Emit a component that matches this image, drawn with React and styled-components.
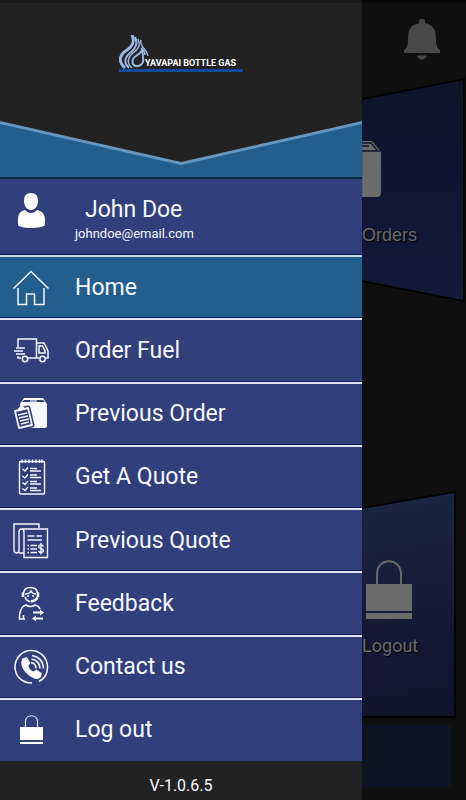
import styled, { createGlobalStyle } from "styled-components";

const GlobalStyle = createGlobalStyle`
  * {
    box-sizing: border-box;
  }

  body {
    margin: 0;
    background: #0f0f0f;
    font-family: Roboto, "Liberation Sans", sans-serif;
  }
`;

const Screen = styled.div`
  display: flex;
  min-height: 100vh;
`;

const Drawer = styled.aside`
  display: flex;
  flex-direction: column;
  flex: 0 0 77.7%;
  border-top: 3px solid #1a1a1a;
  background: #222;
  color: #f5f8ff;
`;

const Brand = styled.header`
  display: flex;
  flex-direction: column;
  align-items: center;
  justify-content: space-between;
  height: 176px;
  padding-top: 32px;
`;

const Logo = styled.div`
  display: flex;
  align-items: flex-end;
  width: 124px;
  border-bottom: 3px solid #14499b;

  svg {
    flex: none;
    margin-right: -4px;
  }
`;

const LogoText = styled.span`
  padding-bottom: 1px;
  font: bold 9px/10px Roboto, "Liberation Sans", sans-serif;
  color: #fff;
  white-space: nowrap;
`;

const Chevron = styled.div`
  width: 100%;
  height: 58px;
  border-bottom: 2px solid #0b2947;
  background: #6797be;
  clip-path: polygon(0 0, 50% 41px, 100% 0, 100% 100%, 0 100%);

  &::before {
    content: "";
    display: block;
    height: 56px;
    background: #235e8d;
    clip-path: polygon(0 3px, 50% 44px, 100% 3px, 100% 100%, 0 100%);
  }
`;

const User = styled.section`
  display: flex;
  gap: 26px;
  height: 76px;
  padding: 14px 13px 0;
  background: #313f7a;
`;

const UserName = styled.h1`
  margin: 2px 0 0 10px;
  font-size: 23px;
  line-height: 30px;
  font-weight: 400;
`;

const UserMail = styled.p`
  margin: 0;
  font-size: 13px;
  line-height: 18px;
`;

const Menu = styled.nav`
  display: flex;
  flex: 1;
  flex-direction: column;
`;

const MenuItem = styled.button`
  display: flex;
  flex: 1 0 60px;
  align-items: center;
  gap: 26px;
  padding: 0 13px;
  border: 0;
  border-top: 2px solid ${({ $active }) => ($active ? "#c4dbe9" : "#dfe5f4")};
  background: ${({ $active }) => ($active ? "#235e8c" : "#313f7a")};
  box-shadow: 0 -1px 0 #10165a;
  color: inherit;
  font-family: inherit;
  font-size: 23px;
  line-height: 28px;
  text-align: left;
  cursor: pointer;
`;

const Icon = styled.svg`
  flex: none;
  width: 36px;
  height: 36px;
  fill: none;
  stroke: #f2f6ff;
`;

const Version = styled.footer`
  height: 39px;
  padding-top: 15px;
  font-size: 16px;
  line-height: 20px;
  text-align: center;
`;

const Backdrop = styled.main`
  display: flex;
  flex: 1;
  flex-direction: column;
  min-width: 0;
  border-top: 3px solid #090909;
  background: #0f0f0f;
  color: #6b6b6b;
`;

const TopBar = styled.div`
  display: flex;
  justify-content: flex-end;
  height: 75px;
  padding: 15px 26px 0 0;
`;

const BellButton = styled.button`
  height: 44px;
  padding: 0;
  border: 0;
  background: none;
  cursor: pointer;
`;

const shapes = {
  orders: "polygon(0 20px, 100% 0, 100% 100%, 0 calc(100% - 20px))",
  logout: "polygon(0 16px, 100% 0, 100% 100%, 0 100%)",
};

const Card = styled.button`
  height: ${({ $shape }) => ($shape === "orders" ? 224 : 227)}px;
  margin: 0 ${({ $shape }) => ($shape === "orders" ? 1 : 10)}px 0 0;
  padding: 2px 2px 2px 0;
  border: 0;
  background: #000;
  clip-path: ${({ $shape }) => shapes[$shape]};
  color: inherit;
  font-family: ${({ $shape }) =>
    $shape === "orders" ? '"Liberation Sans", sans-serif' : "Roboto, sans-serif"};
  font-size: 18px;
  line-height: 24px;
  text-align: left;
  cursor: pointer;
`;

const CardFace = styled.span`
  display: flex;
  flex-direction: column;
  justify-content: flex-end;
  gap: ${({ $shape }) => ($shape === "orders" ? 26 : 14)}px;
  height: 100%;
  padding-bottom: ${({ $shape }) => ($shape === "orders" ? 53 : 58)}px;
  background: ${({ $shape }) =>
    $shape === "orders"
      ? "linear-gradient(#0e1428, #101634 60%, #15193a)"
      : "linear-gradient(170deg, #1a2743, #171a38 50%, #0f142b)"};
  clip-path: ${({ $shape }) => shapes[$shape]};
  text-shadow: 1px 1px 1px #000;

  svg {
    display: block;
  }
`;

const Spacer = styled.div`
  flex: 0 1 189px;
`;

const BottomPanel = styled.div`
  height: 62px;
  margin: 7px 15px 13px 0;
  background: #0c1422;
`;

const Flame = () => (
  <svg width="30" height="34" viewBox="0 0 30 34" fill="none" stroke="#9db9e6">
    <path d="M13 0C16 7 14 11 8 15C0 20 -1 27 6 33" strokeWidth="3" />
    <path d="M16 2C19 9 17 13 11 18C5 23 5 28 10 33" strokeWidth="2" />
    <path d="M19 4C22 11 19 14 14 18C8 23 8 29 13 33" strokeWidth="1.5" />
    <path d="M23 15C22 19 16 20 14 24C12 29 16 32 19 31C24 30 25 26 24 22C24 20 24 17 23 15Z" strokeWidth="2" />
    <path d="M22 5C20 12 28 14 29 21M22 13C24 15 26 17 26 20" strokeWidth="1.5" />
  </svg>
);

const UserIcon = () => (
  <Icon viewBox="0 0 36 36">
    <path
      d="M18 0C23 0 25 3 25 8C25 13 22 17 18 17C14 17 11 13 11 8C11 3 13 0 18 0ZM12 17C15 21 21 21 24 17C29 18 32 21 32 27V32C29 36 7 36 5 32V27C5 21 7 18 12 17Z"
      fill="#fff"
      stroke="none"
    />
  </Icon>
);

const HomeIcon = () => (
  <Icon viewBox="0 0 36 36" strokeWidth="1.5">
    <path d="M.5 18.500L18 1.500L35.500 18.500M5 18V34.500H13.500V24H21.500V34.500H31V18" />
  </Icon>
);

const TruckIcon = () => (
  <Icon viewBox="0 0 36 36" strokeWidth="1.5">
    <path d="M5 14V6H23.500V25H15M23.500 10H31L35 18V25H33M26 25H23.500M5 23V25H8" />
    <path d="M26 13H29.500L32 18V20H26ZM3 15H12M1 18H10M3 21H12" />
    <circle cx="12" cy="26" r="2.700" />
    <circle cx="29.500" cy="26" r="2.700" />
  </Icon>
);

const BoxIcon = () => (
  <Icon viewBox="0 0 36 36">
    <path d="M11 2H30L34 8V30Q34 32 32 32H10L7 8Z" fill="#f5f8ff" stroke="none" />
    <path d="M11 4H30L32 6H9Z" fill="#313f7a" stroke="none" />
    <path d="M17 4H24V6H17Z" fill="#9aa5cc" stroke="none" />
    <path
      d="M2 15L15 12L19 29L6 32Z"
      fill="#313f7a"
      stroke="#313f7a"
      strokeWidth="5"
      strokeLinejoin="round"
    />
    <path d="M2 15L15 12L19 29L6 32Z" strokeWidth="1.8" strokeLinejoin="round" />
    <path d="M5 15L6 12L9 10L12 13Z" fill="#f5f8ff" />
    <path d="M5 19L14 17M6 22L15 20M7 25L16 23M8 28L16 26" strokeWidth="1.5" />
  </Icon>
);

const ListIcon = () => (
  <Icon viewBox="0 0 36 36" strokeWidth="1.4">
    <rect x="6.500" y="2.500" width="25" height="32.500" rx="1" />
    <path d="M9 .5V4M12.500 .5V4M16 .5V4M19.500 .5V4M23 .5V4M26.500 .5V4M29 .5V4" />
    <path d="M9.500 10L12 12L15 8.500M9.500 17L12 19L15 15.500M9.500 23.500L12 25.500L15 22M9.500 29.500L12 31.500L15 28" />
    <path d="M17 9.500H24M17 12H28M17 16H24M17 18.500H28M17 22.500H24M17 25H28M17 29H24M17 31.500H28" />
  </Icon>
);

const QuoteIcon = () => (
  <Icon viewBox="0 0 36 36" strokeWidth="1.4">
    <path d="M26 5V1H1V27Q1 30 3.500 30Q6 30 6 27V9Q6 6 8.500 6Q11 6 11 9V34.500H34.500V6H8.500M6 30H11" />
    <path d="M14.500 13H21.500M23.500 13H29M14.500 17H29M14.500 22.500H16M17.500 22.500H24M14.500 26H16M17.500 26H24M14.500 29.500H16M17.500 29.500H24" />
    <path d="M30.500 23.500Q29.500 22 28 22Q25.500 22 25.800 24C26 26 30.500 25 30.500 27.800Q30 29.500 28 29.500Q26 29.500 25.500 28M28 20V31.500" />
  </Icon>
);

const FeedbackIcon = () => (
  <Icon viewBox="0 0 36 36" strokeWidth="1.6">
    <path d="M10.500 7C11 3 14 1.500 17.500 1.500C21 1.500 24 3 24.500 7M12 8C15 8 17 7 18 5C19 7 21 8 23 8M12 11C13 14 15 15.500 17.500 15.500" />
    <path d="M10 6.500V11M25 6.500V11" strokeWidth="2.6" />
    <path d="M24.500 11Q23 15 18 15.500" strokeWidth="2.4" />
    <path d="M14 10H16M19 10H21" strokeWidth="1.4" />
    <path d="M12 33H6.500V29Q8 20 13 19Q17.500 22 22 19Q26 20 27 23M10.500 33V29" />
    <path d="M20 26.500H28M30 32.500H22" strokeWidth="1.8" />
    <path d="M27 23.500L31 26.500L27 29.500ZM23 29.500L19 32.500L23 35.500Z" fill="#f2f6ff" stroke="none" />
  </Icon>
);

const PhoneIcon = () => (
  <Icon viewBox="0 0 36 36" strokeWidth="1.6">
    <path d="M19 34C9 34 2 27 2 18C2 9 9 1.500 18 1.500C27.500 1.500 34.500 9 34.500 18C34.500 25 31 30 26 32.500" />
    <path
      d="M10 10L13.500 9L16.500 14L14.500 17C15.500 20 18 22.500 20.500 23.500L23.500 21.500L28 24.500L27 28C23 32 9 23 9 13.500Z"
      fill="#fff"
    />
    <path d="M18 13.500Q23 14.500 23 19.500M18.500 10Q26.500 11.500 27 19.500M19 6.500Q30 8.500 30.500 19.500" />
  </Icon>
);

const LockIcon = () => (
  <Icon viewBox="0 0 36 36">
    <path d="M12.500 15V9.500C12.500 1.800 24.500 1.800 24.500 9.500V15" strokeWidth="1.1" />
    <path d="M7 15H30V28H7ZM7 30H30V32H7Z" fill="#fff" stroke="none" />
  </Icon>
);

const items = [
  { label: "Home", icon: HomeIcon, active: true },
  { label: "Order Fuel", icon: TruckIcon },
  { label: "Previous Order", icon: BoxIcon },
  { label: "Get A Quote", icon: ListIcon },
  { label: "Previous Quote", icon: QuoteIcon },
  { label: "Feedback", icon: FeedbackIcon },
  { label: "Contact us", icon: PhoneIcon },
  { label: "Log out", icon: LockIcon },
];

function App() {
  return (
    <>
      <GlobalStyle />
      <Screen>
        <Drawer>
          <Brand>
            <Logo>
              <Flame />
              <LogoText>YAVAPAI BOTTLE GAS</LogoText>
            </Logo>
            <Chevron />
          </Brand>
          <User>
            <UserIcon />
            <div>
              <UserName>John Doe</UserName>
              <UserMail>johndoe@email.com</UserMail>
            </div>
          </User>
          <Menu>
            {items.map(({ label, icon: ItemIcon, active }) => (
              <MenuItem key={label} type="button" $active={active}>
                <ItemIcon />
                {label}
              </MenuItem>
            ))}
          </Menu>
          <Version>V-1.0.6.5</Version>
        </Drawer>

        <Backdrop>
          <TopBar>
            <BellButton type="button" aria-label="Notifications">
              <svg width="36" height="44" viewBox="0 0 36 44" fill="#484848">
                <path d="M15 5V3C15 0 21 0 21 3V5C29 7 32 12 32 20C32 28 33 30 36 32V35H0V32C3 30 4 28 4 20C4 12 7 7 15 5ZM13 37.500H23C22 43 14 43 13 37.500Z" />
              </svg>
            </BellButton>
          </TopBar>
          <Card type="button" $shape="orders">
            <CardFace $shape="orders">
              <svg width="20" height="56" viewBox="0 0 20 56">
                <path d="M0 0H10L19 11V52Q19 56 15 56H0Z" fill="#6b6b6b" />
                <path d="M0 2H9L15 9M0 5H7M0 10H18" fill="none" stroke="#10152c" strokeWidth="1.5" />
              </svg>
              Orders
            </CardFace>
          </Card>
          <Spacer />
          <Card type="button" $shape="logout">
            <CardFace $shape="logout">
              <svg width="50" height="60" viewBox="0 0 50 60">
                <path d="M15 26V14C15 -3 39 -3 39 14V26" fill="none" stroke="#686868" strokeWidth="2" />
                <path d="M4 24H50V51H4ZM4 53H50V59H4Z" fill="#6b6b6b" />
              </svg>
              Logout
            </CardFace>
          </Card>
          <BottomPanel />
        </Backdrop>
      </Screen>
    </>
  );
}

export default App;
